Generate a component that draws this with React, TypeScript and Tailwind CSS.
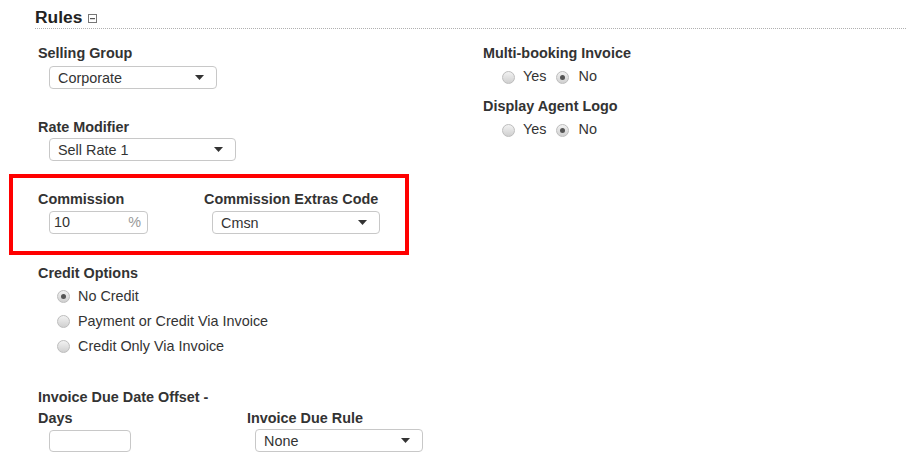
import React from 'react';

/* ─── Small form parts ─── */

const Label: React.FC<{ children: React.ReactNode; className?: string }> = ({ children, className = '' }) => (
    <div className={`text-[14.4px] leading-[20px] font-bold text-[#333] ${className}`}>{children}</div>
);

const FakeSelect: React.FC<{ value: string; width: string; className?: string }> = ({ value, width, className = '' }) => (
    <div
        className={`${width} h-[23px] flex items-center justify-between border border-[#c8c8c8] rounded-[4px] bg-white pl-[8px] pr-[12px] text-[14.4px] text-[#333] ${className}`}
    >
        <span className="leading-[20px]">{value}</span>
        <svg width="9" height="5" viewBox="0 0 9 5" className="shrink-0">
            <polygon points="0,0 9,0 4.5,5" fill="#333" />
        </svg>
    </div>
);

const Radio: React.FC<{ checked?: boolean }> = ({ checked }) => (
    <span className="w-[13px] h-[13px] rounded-full border border-[#bdbdbd] bg-gradient-to-b from-[#f2f2f2] to-[#d0d0d0] flex items-center justify-center shrink-0">
        {checked && <span className="w-[5px] h-[5px] rounded-full bg-[#555]" />}
    </span>
);

const YesNo: React.FC = () => (
    <div className="flex items-center h-[20px] pl-[19px] text-[14.4px] text-[#333]">
        <Radio />
        <span className="ml-[8px]">Yes</span>
        <span className="ml-[10px] flex items-center">
            <Radio checked />
        </span>
        <span className="ml-[9px]">No</span>
    </div>
);

const CreditOption: React.FC<{ label: string; checked?: boolean }> = ({ label, checked }) => (
    <div className="flex items-center h-[25px] pl-[19px] text-[14.4px] text-[#333]">
        <Radio checked={checked} />
        <span className="ml-[8px]">{label}</span>
    </div>
);

/* ─── Page ─── */

export default function App() {
    return (
        <div className="w-[906px] h-[468px] bg-white overflow-hidden font-['Liberation_Sans',Arial,sans-serif]">
            {/* Heading */}
            <div className="ml-[35px] pt-[7px] pb-[1px] border-b border-dotted border-[#b0b0b0] flex items-center">
                <span className="text-[17.4px] leading-[20px] font-bold text-[#222]">Rules</span>
                <svg width="9" height="9" viewBox="0 0 9 9" className="ml-[6px] mt-[2px]">
                    <rect x="0.5" y="0.5" width="8" height="8" fill="#fff" stroke="#777" />
                    <rect x="2" y="4" width="5" height="1.2" fill="#555" />
                </svg>
            </div>

            <div className="flex">
                {/* Left column */}
                <div className="w-[474px] pl-[9px]">
                    <div className="ml-[29px] mt-[14px]">
                        <Label>Selling Group</Label>
                        <FakeSelect value="Corporate" width="w-[168px]" className="ml-[11px] mt-[3px]" />
                    </div>

                    <div className="ml-[29px] mt-[28px]">
                        <Label>Rate Modifier</Label>
                        <FakeSelect value="Sell Rate 1" width="w-[187px]" className="ml-[11px] mt-[1px]" />
                    </div>

                    {/* Highlighted commission row */}
                    <div className="mt-[13px] w-[400px] border-4 border-[#ff0000] pl-[25px] pt-[11px] pb-[17px] flex">
                        <div className="w-[166px]">
                            <Label>Commission</Label>
                            <div className="ml-[11px] mt-[2px] w-[99px] h-[23px] border border-[#c8c8c8] rounded-[4px] flex items-center justify-between pl-[4px] pr-[6px] text-[14.4px]">
                                <span className="text-[#333]">10</span>
                                <span className="text-[#999]">%</span>
                            </div>
                        </div>
                        <div>
                            <Label>Commission Extras Code</Label>
                            <FakeSelect value="Cmsn" width="w-[168px]" className="ml-[8px] mt-[2px]" />
                        </div>
                    </div>

                    <div className="ml-[29px] mt-[8px]">
                        <Label>Credit Options</Label>
                        <div className="mt-[1px]">
                            <CreditOption label="No Credit" checked />
                            <CreditOption label="Payment or Credit Via Invoice" />
                            <CreditOption label="Credit Only Via Invoice" />
                        </div>
                    </div>

                    <div className="ml-[29px] mt-[28px] flex items-end">
                        <div className="w-[209px] pr-[15px]">
                            <Label className="leading-[21px]">Invoice Due Date Offset - Days</Label>
                            <div className="ml-[11px] mt-[1px] w-[82px] h-[22px] border border-[#c8c8c8] rounded-[4px]" />
                        </div>
                        <div>
                            <Label className="leading-[21px]">Invoice Due Rule</Label>
                            <FakeSelect value="None" width="w-[168px]" className="ml-[8px]" />
                        </div>
                    </div>
                </div>

                {/* Right column */}
                <div className="pl-[9px]">
                    <div className="mt-[14px]">
                        <Label>Multi-booking Invoice</Label>
                        <div className="mt-[4px]">
                            <YesNo />
                        </div>
                    </div>
                    <div className="mt-[9px]">
                        <Label>Display Agent Logo</Label>
                        <div className="mt-[4px]">
                            <YesNo />
                        </div>
                    </div>
                </div>
            </div>
        </div>
    );
}
